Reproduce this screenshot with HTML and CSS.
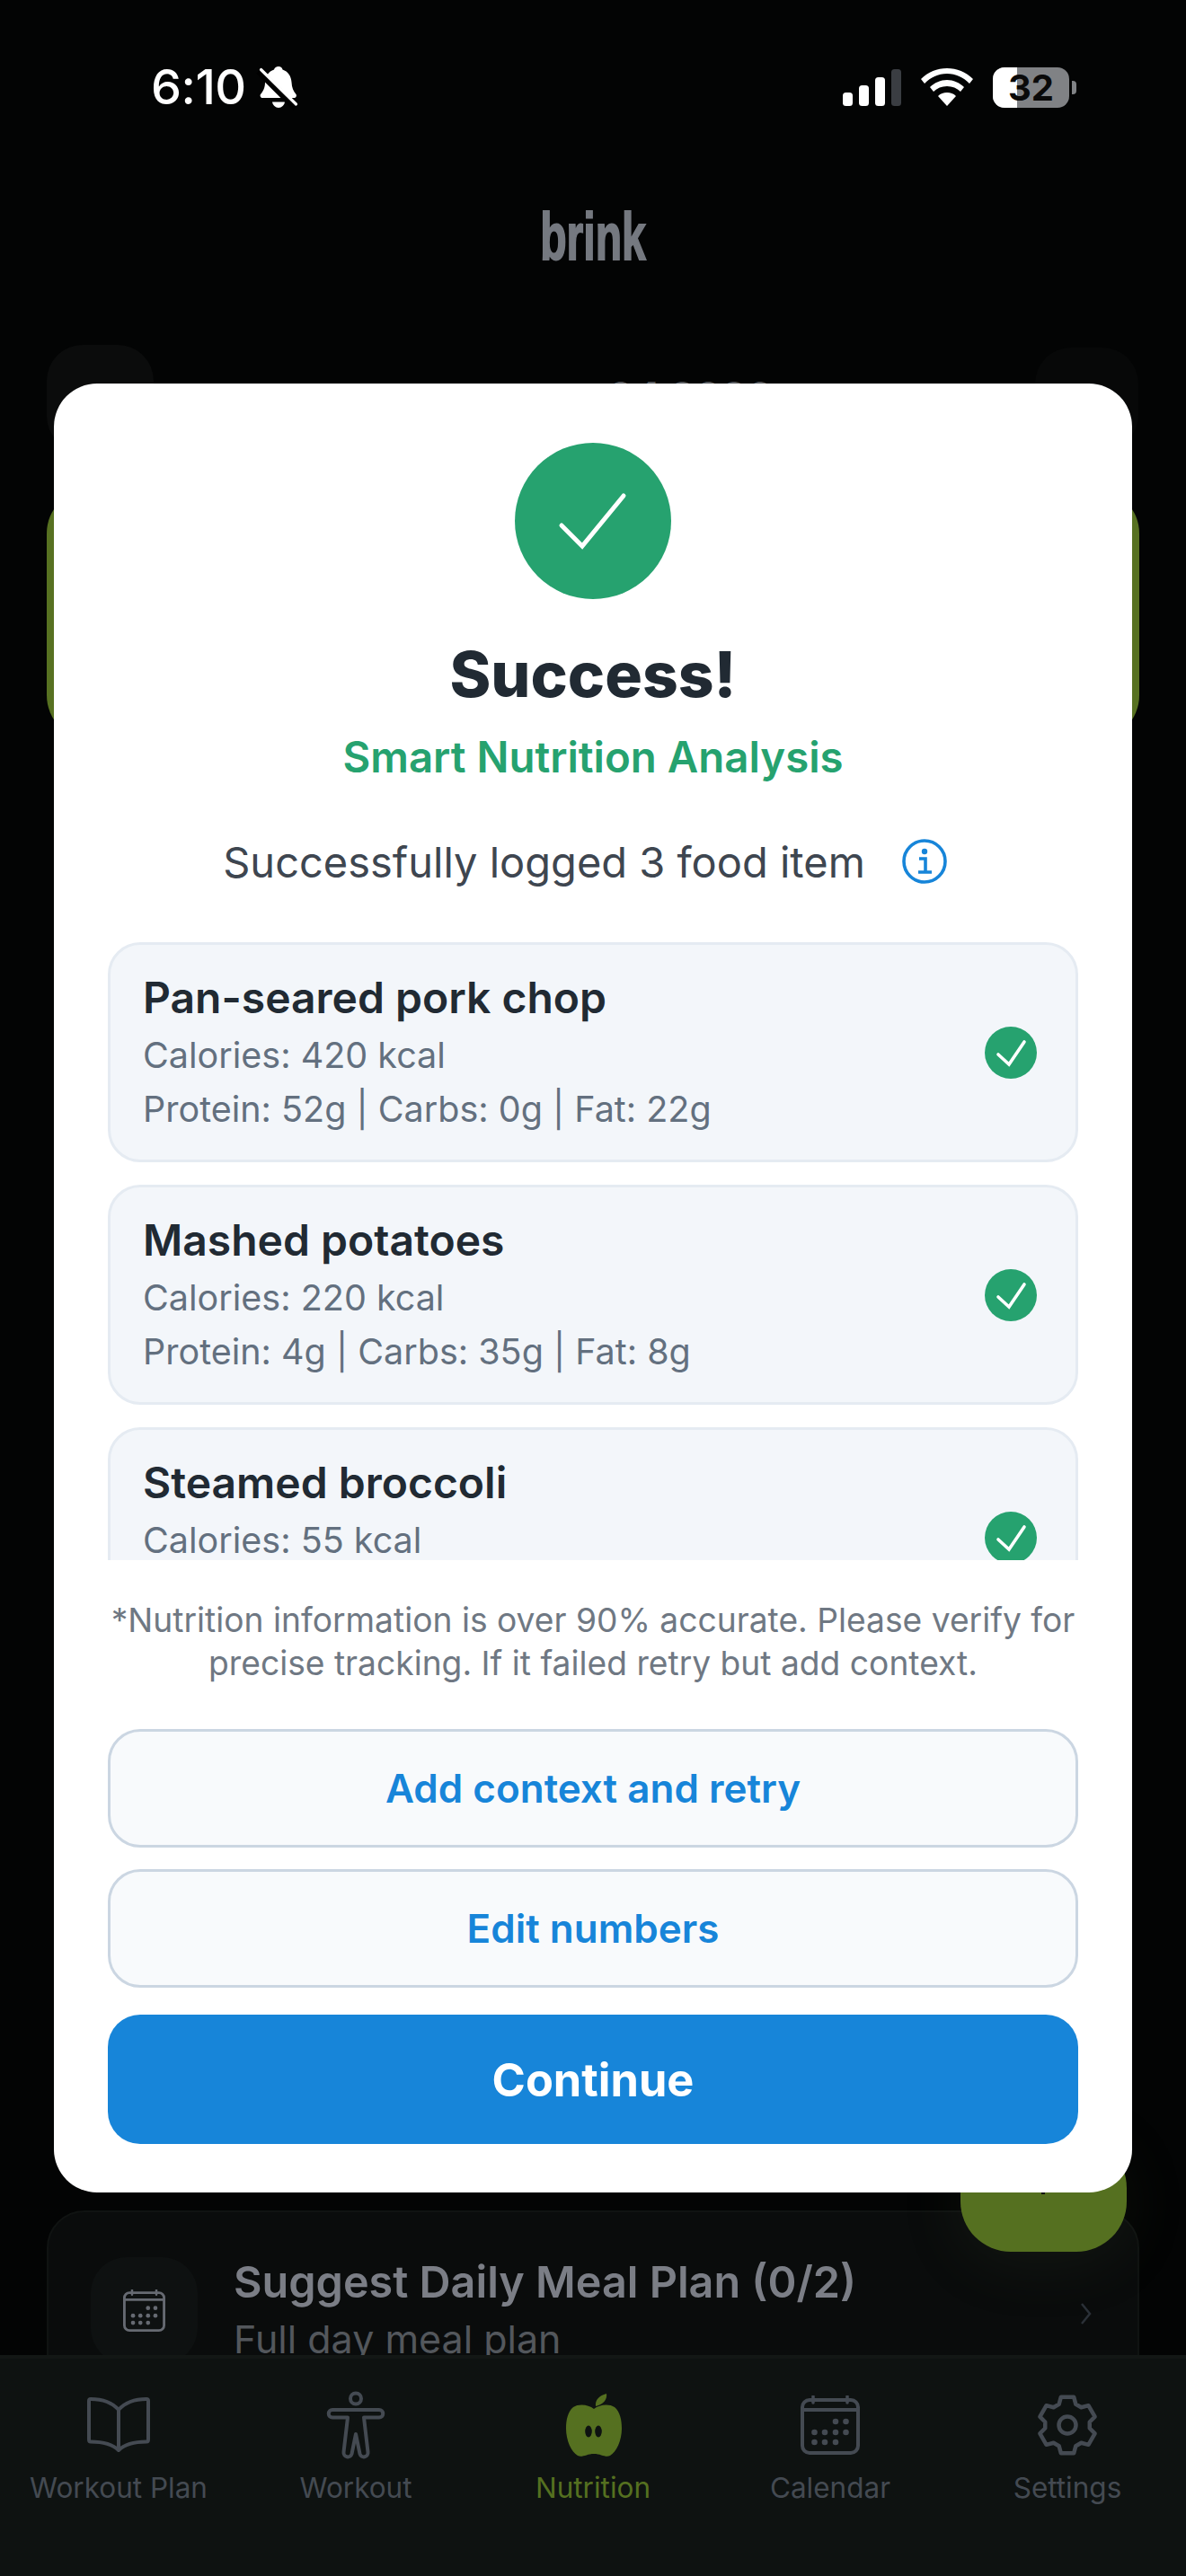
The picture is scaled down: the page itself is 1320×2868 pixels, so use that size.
FILE: index.html
```html
<!DOCTYPE html>
<html lang="en">
<head>
<meta charset="utf-8">
<title>Brink nutrition</title>
<link rel="stylesheet" href="styles.css">
</head>
<body>
<svg class="defs" aria-hidden="true"><symbol id="cal" viewBox="0 0 66 66"><path d="M14 1v7M52 1v7" stroke="currentColor" stroke-width="3.500" stroke-linecap="round"/><rect x="2" y="5" width="62" height="59" rx="8" fill="none" stroke="currentColor" stroke-width="4"/><path d="M2 16h62" stroke="currentColor" stroke-width="4"/><g fill="currentColor"><circle cx="39" cy="29" r="3.300"/><circle cx="50.500" cy="29" r="3.300"/><circle cx="15.500" cy="41" r="3.300"/><circle cx="27" cy="41" r="3.300"/><circle cx="39" cy="41" r="3.300"/><circle cx="50.500" cy="41" r="3.300"/><circle cx="15.500" cy="52" r="3.300"/><circle cx="27" cy="52" r="3.300"/><circle cx="39" cy="52" r="3.300"/></g></symbol></svg>
<div class="phone">
  <header class="status">
    <div class="status-left">
      <span class="time">6:10</span>
      <svg class="bell" viewBox="0 0 42 46"><path d="M21 0c2.500 0 4 1.500 4.500 3.500 6 2 9.500 7 10 14 .3 6 2 10 5 13.500 1 1.500 0 4-2 4H3c-2 0-3-2.500-2-4 3-3.500 5-7.500 5-13.500.5-7 4-12 10-14C16.500 1.500 18.500 0 21 0z" fill="#fff"/><path d="M14 39.500h14c-.5 3.500-3.500 6.500-7 6.500s-6.500-3-7-6.500z" fill="#fff"/><path d="M-1 5l41 41" stroke="#000" stroke-width="8"/><path d="M1.500 3.500L40.500 42" stroke="#fff" stroke-width="3.200" stroke-linecap="round"/></svg>
    </div>
    <div class="status-right">
      <svg class="signal" viewBox="0 0 65 41"><rect x="0" y="26" width="11" height="15" rx="3.500" fill="#fff"/><rect x="18" y="18" width="11" height="23" rx="3.500" fill="#fff"/><rect x="36" y="9" width="11" height="32" rx="3.500" fill="#fff"/><rect x="54" y="0" width="11" height="41" rx="3.500" fill="#3a3d42"/></svg>
      <svg class="wifi" viewBox="0 0 58 42"><path d="M29 0c11 0 21 4 29 12l-4 5C47 10 39 6 29 6S11 10 4 17l-4-5C8 4 18 0 29 0z" fill="#fff"/><path d="M29 13c7 0 14 3 19 8l-4 5c-4-4-9-6-15-6s-11 2-15 6l-4-5c5-5 12-8 19-8z" fill="#fff"/><path d="M29 27c4 0 7 1 10 4L29 42 19 31c3-3 6-4 10-4z" fill="#fff"/></svg>
      <div class="battery"><div class="battery-body"><span class="battery-fill"></span><span class="battery-num">32</span></div><span class="battery-cap"></span></div>
    </div>
  </header>

  <div class="brand">brink</div>

  <div class="behind">
    <div class="ghost-row">
      <span class="ghost-btn"></span>
      <span class="ghost-date">04 2026</span>
      <span class="ghost-btn ghost-btn-r"></span>
    </div>
    <div class="green-card"></div>
    <div class="plan-card">
      <div class="plan-icon">
        <svg class="cal-small"><use href="#cal"/></svg>
      </div>
      <div class="plan-text">
        <div class="plan-title">Suggest Daily Meal Plan (0/2)</div>
        <div class="plan-sub">Full day meal plan</div>
      </div>
      <svg class="chev" viewBox="0 0 15 24"><path d="M3 1l9 11-9 11" fill="none" stroke="#2b3138" stroke-width="2.500"/></svg>
    </div>
    <div class="fab"></div>
  </div>

  <main class="modal">
    <div class="modal-head">
      <div class="big-check"><svg viewBox="0 0 174 174"><path d="M52 92l23 23 46-56" fill="none" stroke="#fff" stroke-width="5" stroke-linecap="round"/></svg></div>
      <h1 class="title">Success!</h1>
      <h2 class="subtitle">Smart Nutrition Analysis</h2>
      <div class="logged">
        <span>Successfully logged 3 food item</span>
        <svg class="info" viewBox="0 0 50 50"><circle cx="25" cy="25" r="23" fill="none" stroke="#1785d9" stroke-width="3.600"/><circle cx="25" cy="14" r="3.200" fill="#1785d9"/><path d="M19 22h7v14M18 37h15" fill="none" stroke="#1785d9" stroke-width="3.600"/></svg>
      </div>
    </div>
    <div class="items">
      <article class="item">
        <div class="item-text">
          <div class="item-name">Pan-seared pork chop</div>
          <div class="item-line">Calories: 420 kcal</div>
          <div class="item-line">Protein: 52g | Carbs: 0g | Fat: 22g</div>
        </div>
        <svg class="tick" viewBox="0 0 58 58"><circle cx="29" cy="29" r="29" fill="#26a26f"/><path d="M15 31l12 11 17-25" fill="none" stroke="#fff" stroke-width="3.600" stroke-linecap="round"/></svg>
      </article>
      <article class="item">
        <div class="item-text">
          <div class="item-name">Mashed potatoes</div>
          <div class="item-line">Calories: 220 kcal</div>
          <div class="item-line">Protein: 4g | Carbs: 35g | Fat: 8g</div>
        </div>
        <svg class="tick" viewBox="0 0 58 58"><circle cx="29" cy="29" r="29" fill="#26a26f"/><path d="M15 31l12 11 17-25" fill="none" stroke="#fff" stroke-width="3.600" stroke-linecap="round"/></svg>
      </article>
      <article class="item">
        <div class="item-text">
          <div class="item-name">Steamed broccoli</div>
          <div class="item-line">Calories: 55 kcal</div>
        </div>
        <svg class="tick" viewBox="0 0 58 58"><circle cx="29" cy="29" r="29" fill="#26a26f"/><path d="M15 31l12 11 17-25" fill="none" stroke="#fff" stroke-width="3.600" stroke-linecap="round"/></svg>
      </article>
    </div>
    <p class="note">*Nutrition information is over 90% accurate. Please verify for precise tracking. If it failed retry but add context.</p>
    <button class="btn btn-outline">Add context and retry</button>
    <button class="btn btn-outline btn-second">Edit numbers</button>
    <button class="btn btn-primary">Continue</button>
  </main>

  <nav class="tabbar">
    <div class="tab">
      <svg class="tab-icon" viewBox="0 0 76 76"><path d="M38 21C30 12 18 9 7 9 5.500 9 5 10 5 11v43c0 2 1 2.500 2 2.500 11 0 23 1.500 31 9.500 8-8 20-9.500 31-9.500 1 0 2-.5 2-2.500V11c0-1-.5-2-2-2-11 0-23 3-31 12zM38 21v45" fill="none" stroke="currentColor" stroke-width="4" stroke-linejoin="round"/></svg>
      <span>Workout Plan</span>
    </div>
    <div class="tab">
      <svg class="tab-icon" viewBox="0 0 76 76"><circle cx="38" cy="8.500" r="6" fill="none" stroke="currentColor" stroke-width="4"/><path d="M12 21h52a4.250 4.250 0 0 1 0 8.500H47l4.500 38.500c.7 6-7.500 7.500-9 2L38 48l-4.500 22c-1.500 5.500-9.700 4-9-2L29 29.500H12a4.250 4.250 0 0 1 0-8.500z" fill="none" stroke="currentColor" stroke-width="4" stroke-linejoin="round"/></svg>
      <span>Workout</span>
    </div>
    <div class="tab tab-active">
      <svg class="tab-icon" viewBox="0 0 76 76"><path d="M41 17C40 10 45 5 53 3c1 6-3 12-12 14z" fill="currentColor"/><path d="M39 20c6-5 17-6 23-2 6 5 8 14 8 24 0 13-6 26-13 30-5 2.500-10-2-18-2s-13 4.500-18 2C14 68 8 55 8 42c0-10 2-19 8-24 6-4 17-3 23 2z" fill="currentColor"/><ellipse cx="33" cy="45" rx="3.800" ry="6.500" fill="#0e1211"/><ellipse cx="44" cy="45" rx="3.800" ry="6.500" fill="#0e1211"/></svg>
      <span>Nutrition</span>
    </div>
    <div class="tab">
      <svg class="tab-icon cal-large"><use href="#cal"/></svg>
      <span>Calendar</span>
    </div>
    <div class="tab">
      <svg class="tab-icon" viewBox="0 0 76 76"><path d="M28.630 14.820L30.800 6.820H45.200L47.370 14.820L53.390 18.300L61.400 16.180L68.600 28.640L62.760 34.520V41.480L68.600 47.360L61.400 59.820L53.390 57.700L47.370 61.180L45.200 69.180H30.800L28.630 61.180L22.610 57.700L14.600 59.820L7.400 47.360L13.240 41.480V34.520L7.400 28.640L14.600 16.180L22.610 18.300z" fill="none" stroke="currentColor" stroke-width="4.500" stroke-linejoin="round"/><circle cx="38" cy="38" r="9.500" fill="none" stroke="currentColor" stroke-width="4.500"/></svg>
      <span>Settings</span>
    </div>
  </nav>
</div>
</body>
</html>
```

FILE: styles.css
```css
* { box-sizing: border-box; }
html, body { margin: 0; padding: 0; background: #000; }
body { font-family: Inter, "Liberation Sans", sans-serif; }
.defs { position: absolute; width: 0; height: 0; }
.phone { position: relative; width: 1320px; height: 2868px; background: #030404; overflow: hidden; }

.status { display: flex; justify-content: space-between; align-items: center; height: 50px; position: relative; top: 72px; padding: 0 122px 0 168px; }
.status-left { display: flex; align-items: center; gap: 15px; }
.time { color: #fff; font-size: 54px; font-weight: 500; line-height: 50px; letter-spacing: -.5px; }
.bell { width: 42px; height: 46px; overflow: visible; }
.status-right { display: flex; align-items: center; gap: 22px; }
.signal { width: 65px; height: 41px; }
.wifi { width: 58px; height: 42px; }
.battery { display: flex; align-items: center; gap: 3px; }
.battery-body { position: relative; width: 85px; height: 45px; border-radius: 13px; background: #808285; }
.battery-fill { position: absolute; left: 0; top: 0; bottom: 0; width: 27px; background: #fff; border-radius: 13px 0 0 13px; }
.battery-num { position: absolute; inset: 0; text-align: center; color: #0a0a0a; font-size: 40px; line-height: 45px; font-weight: 700; }
.battery-cap { width: 5px; height: 15px; border-radius: 0 4px 4px 0; background: #808285; }

.brand { margin: 184px 0 0; text-align: center; color: #757980; font-family: "Liberation Sans", sans-serif; font-weight: 700; font-size: 74px; line-height: 60px; -webkit-text-stroke: 2px #757980; transform: scaleX(.65); }

.behind { position: absolute; inset: 0; }
.ghost-row { position: absolute; left: 52px; right: 53px; top: 384px; display: flex; align-items: flex-start; }
.ghost-btn { width: 119px; height: 119px; border-radius: 40px; background: #0b0c0c; }
.ghost-btn-r { width: 115px; height: 115px; margin: 3px 0 0 auto; background: #070808; }
.ghost-date { color: #55585c; font-size: 44px; line-height: 44px; font-weight: 700; margin: 35px 0 0 505px; }
.green-card { position: absolute; left: 52px; width: 1216px; top: 544px; height: 280px; border-radius: 50px; background: #577121; }
.fab { position: absolute; left: 1069px; top: 2380px; width: 185px; height: 127px; border-radius: 56px; background: #557020; box-shadow: 0 10px 70px rgba(80, 90, 60, .14); }
.fab::after { content: ""; position: absolute; left: 90px; top: 56px; width: 4px; height: 7px; background: #111; }
.plan-card { position: absolute; left: 52px; top: 2461px; width: 1216px; height: 240px; border: 2px solid #101312; border-radius: 42px; background: #0a0c0c; padding: 50px 50px 0 47px; display: flex; gap: 40px; align-items: flex-start; }
.plan-icon { flex: none; width: 119px; height: 119px; border-radius: 40px; background: #0e1111; color: #666a72; display: flex; align-items: center; justify-content: center; }
.cal-small { width: 47px; height: 47px; }
.plan-text { flex: 1; margin-top: -3px; }
.plan-title { color: #7b7e86; font-size: 48.500px; font-weight: 600; line-height: 62px; white-space: nowrap; }
.plan-sub { color: #53575c; font-size: 43px; line-height: 60px; margin-top: 2px; }
.chev { flex: none; width: 15px; height: 24px; margin-top: 51px; }

.modal { position: absolute; left: 60px; top: 427px; width: 1200px; height: 2014px; background: #fff; border-radius: 48px; padding: 0 60px; display: flex; flex-direction: column; align-items: stretch; }
.modal-head { display: flex; flex-direction: column; align-items: center; }
.big-check { width: 174px; height: 174px; margin-top: 66px; border-radius: 50%; background: #26a26f; }
.big-check svg { display: block; width: 174px; height: 174px; }
.title { margin: 42px 0 0; font-size: 69.500px; line-height: 84px; font-weight: 800; color: #212a33; }
.subtitle { margin: 19px 0 0; font-size: 47.400px; line-height: 62px; font-weight: 600; color: #26a26f; }
.logged { display: flex; align-items: center; gap: 41px; margin: 54px 18px 0 0; height: 62px; font-size: 47px; color: #3e4650; }
.info { width: 50px; height: 50px; }
.items { margin-top: 59px; height: 688px; overflow: hidden; display: flex; flex-direction: column; gap: 25px; flex: none; }
.item { flex: none; height: 245px; display: flex; align-items: center; padding: 0 43px 0 36px; border: 3px solid #e5ebf2; border-radius: 36px; background: #f3f6fa; }
.item-text { flex: 1; align-self: flex-start; margin-top: 29px; }
.item-name { font-size: 48px; line-height: 60px; font-weight: 600; color: #212a33; margin-bottom: 4px; }
.item-line { font-size: 39.500px; line-height: 60px; color: #63707f; }
.tick { width: 58px; height: 58px; }
.note { margin: 43px 0 0; text-align: center; font-size: 37.200px; line-height: 48px; color: #6f7883; }
.btn { display: block; width: 100%; font-family: inherit; flex: none; }
.btn-outline { margin-top: 49px; height: 132px; border: 3px solid #cbd6e2; border-radius: 36px; background: #f8fafc; color: #1785d9; font-size: 44px; font-weight: 600; }
.btn-second { margin-top: 24px; }
.btn-primary { margin-top: 30px; height: 144px; border: 0; border-radius: 36px; background: #1785d9; color: #fff; font-size: 50.500px; font-weight: 700; }

.tabbar { position: absolute; left: 0; right: 0; top: 2622px; height: 246px; background: #0e1211; border-top: 4px solid #131715; display: flex; }
.tab { width: 264px; display: flex; flex-direction: column; align-items: center; color: #444a52; font-size: 31.500px; padding-top: 36px; }
.tab-icon { width: 76px; height: 76px; margin-bottom: 10px; }
.cal-large { padding: 5px; }
.tab span { line-height: 44px; }
.tab-active { color: #557020; }
```
